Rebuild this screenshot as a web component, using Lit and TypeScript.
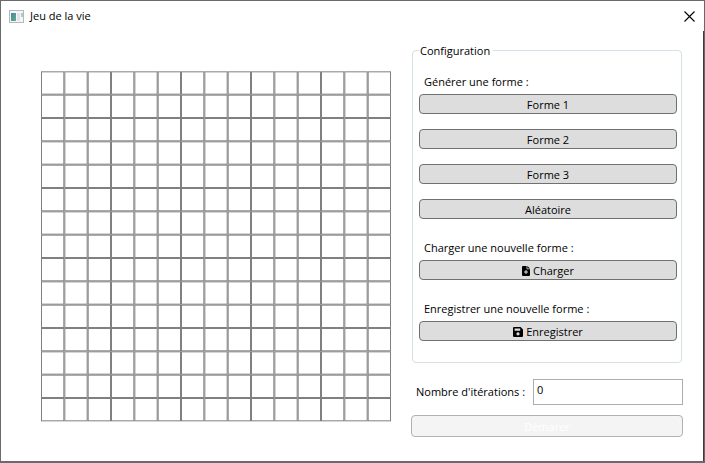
import { LitElement, html, css, svg } from "lit";
import { customElement } from "lit/decorators.js";

const CELLS = 15;
const BOARD = 350;
const CELL = BOARD / CELLS;

@customElement("life-board")
class LifeBoard extends LitElement {
  static styles = css`
    :host { display: block; }
    .board { display: block; width: 100%; }
    .cell { fill: #fff; stroke: #808080; stroke-width: 1; }
  `;

  render() {
    const cells = [];
    for (let row = 0; row < CELLS; row++) {
      for (let col = 0; col < CELLS; col++) {
        cells.push(svg`<rect class="cell" x=${col * CELL + 0.5} y=${row * CELL + 0.83}
          width=${CELL - 1} height=${CELL - 1}></rect>`);
      }
    }
    return html`<svg class="board" viewBox="0 0 350 351" role="img" aria-label="Grille">${cells}</svg>`;
  }
}

@customElement("app-root")
class AppRoot extends LitElement {
  static styles = css`
    :host {
      display: block;
      font-family: "Open Sans", "Noto Sans", sans-serif;
      font-size: 11px;
      line-height: 16px;
      color: #000;
    }
    * { box-sizing: border-box; }
    .window {
      min-height: 100vh;
      background: #fff;
      border: 1px solid #6b696b;
      border-bottom: 2px solid #6b696b;
      display: flex;
      flex-direction: column;
    }
    .titlebar {
      display: flex;
      align-items: center;
      height: 30px;
      padding: 0 9px 0 8px;
      gap: 6px;
    }
    .title { flex: 1; }
    .close {
      display: flex;
      border: 0;
      padding: 0;
      background: none;
    }
    .content {
      flex: 1;
      display: grid;
      grid-template-columns: minmax(0, 350fr) minmax(0, 272fr);
      column-gap: 20px;
      align-items: start;
      padding: 11px 20px 20px 40px;
      border-right: 1px solid #3c3c3c;
    }
    .board-area { padding-top: 29px; }
    .group {
      margin: 0 1px 16px;
      padding: 15px 4px 21px 6px;
      border: 1px solid #d5dfe5;
      border-radius: 4px;
      min-width: 0;
      display: flex;
      flex-direction: column;
      gap: 21px;
    }
    .legend { padding: 0 3px 0 1px; line-height: 17px; }
    .section { display: flex; flex-direction: column; }
    .label { margin: 0 5px 4px; }
    .buttons { display: flex; flex-direction: column; gap: 15px; }
    .button {
      display: flex;
      align-items: center;
      justify-content: center;
      gap: 3px;
      width: 100%;
      height: 20px;
      padding: 1px 0 0;
      border: 1px solid #707070;
      border-radius: 4px;
      background: #ddd;
      color: #000;
      font: inherit;
    }
    .start { height: 22px; }
    .button:disabled { background: #f4f4f4; border-color: #adb2b5; color: #fff; }
    .iterations {
      display: flex;
      align-items: center;
      justify-content: space-between;
      padding-left: 5px;
      margin-bottom: 10px;
      white-space: nowrap;
    }
    .number {
      width: 150px;
      height: 26px;
      padding: 0 3px 6px;
      border: 1px solid #abadb3;
      background: #fff;
      color: #000;
      font: inherit;
    }
  `;

  render() {
    return html`
      <div class="window">
        <header class="titlebar">
          <svg width="15" height="13" viewBox="0 0 15 13" aria-hidden="true">
            <defs>
              <linearGradient id="pane" x1="0" y1="0" x2="1" y2="1">
                <stop offset="0" stop-color="#4f80a8" />
                <stop offset="1" stop-color="#5fb086" />
              </linearGradient>
            </defs>
            <rect x="0.5" y="0.5" width="14" height="12" fill="#f4f6f8" stroke="#b4b8bc" />
            <rect x="2" y="3" width="5" height="8" fill="url(#pane)" />
            <rect x="8" y="3" width="3" height="8" fill="#e2e4e8" />
            <rect x="12" y="3" width="2" height="4" fill="#a8d0c0" />
          </svg>
          <span class="title">Jeu de la vie</span>
          <button class="close" aria-label="Fermer">
            <svg width="11" height="11" viewBox="0 0 11 11">
              <path d="M0.5 0.5 10.5 10.5M10.5 0.5 0.5 10.5" stroke="#000" stroke-width="1.1" fill="none" />
            </svg>
          </button>
        </header>
        <main class="content">
          <div class="board-area"><life-board></life-board></div>
          <form class="panel">
            <fieldset class="group">
              <legend class="legend">Configuration</legend>
              <div class="section">
                <span class="label">Générer une forme :</span>
                <div class="buttons">
                  ${["Forme 1", "Forme 2", "Forme 3", "Aléatoire"].map(
                    (name) => html`<button type="button" class="button">${name}</button>`
                  )}
                </div>
              </div>
              <div class="section">
                <span class="label">Charger une nouvelle forme :</span>
                <button type="button" class="button">
                  <svg width="8" height="10" viewBox="0 0 8 10" aria-hidden="true">
                    <path d="M1 0h3.6v3.2H8V9a1 1 0 0 1-1 1H1a1 1 0 0 1-1-1V1a1 1 0 0 1 1-1zM5.3 0 8 2.6H5.3z" />
                    <path d="M4 4v4M2 6h4" stroke="#ddd" stroke-width="1" />
                  </svg>
                  Charger
                </button>
              </div>
              <div class="section">
                <span class="label">Enregistrer une nouvelle forme :</span>
                <button type="button" class="button">
                  <svg width="10" height="10" viewBox="0 0 10 10" aria-hidden="true">
                    <path fill-rule="evenodd" d="M1 0h6.6L10 2.4V9a1 1 0 0 1-1 1H1a1 1 0 0 1-1-1V1a1 1 0 0 1 1-1zM1.6 1.4v2.4h5.6V1.4zM5 5.2a1.6 1.6 0 1 0 0 3.2 1.6 1.6 0 0 0 0-3.2z" />
                  </svg>
                  Enregistrer
                </button>
              </div>
            </fieldset>
            <div class="iterations">
              <label for="iterations">Nombre d'itérations :</label>
              <input id="iterations" class="number" type="text" value="0" />
            </div>
            <button type="button" class="button start" disabled>Démarer</button>
          </form>
        </main>
      </div>
    `;
  }
}
